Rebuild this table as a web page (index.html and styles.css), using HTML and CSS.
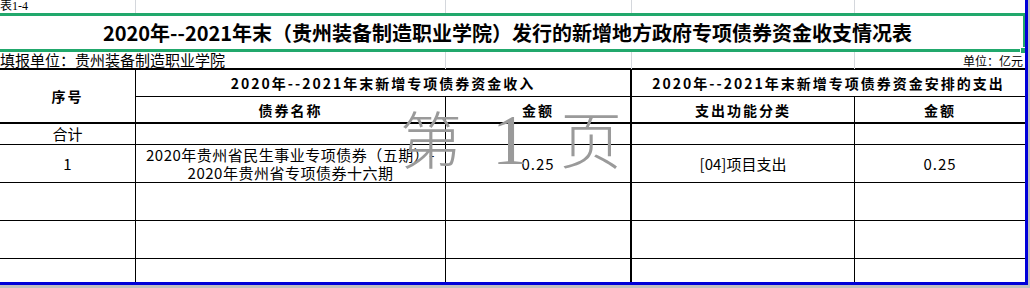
FILE: index.html
```html
<!DOCTYPE html>
<html lang="zh-CN">
<head>
<meta charset="utf-8">
<title>专项债券资金收支情况表</title>
<link rel="stylesheet" href="styles.css">
</head>
<body>
<div class="page">
  <div class="sheet">
    <div class="gridrow toprow">
      <div class="gc"><span class="tag">表1-4</span></div>
      <div class="gc"></div>
      <div class="gc"></div>
      <div class="gc"></div>
      <div class="gc last"></div>
    </div>
    <div class="title">
      <span>2020年--2021年末（贵州装备制造职业学院）发行的新增地方政府专项债券资金收支情况表</span>
      <span class="handle"></span>
    </div>
    <div class="gridrow unitrow">
      <div class="gc span2"><span class="unit-left">填报单位：贵州装备制造职业学院</span></div>
      <div class="gc"></div>
      <div class="gc"></div>
      <div class="gc last right"><span class="unit-right">单位：亿元</span></div>
    </div>
    <div class="table">
      <div class="cell hd seq">序号</div>
      <div class="cell hd grp">2020年--2021年末新增专项债券资金收入</div>
      <div class="cell hd grp last">2020年--2021年末新增专项债券资金安排的支出</div>

      <div class="cell hd sub">债券名称</div>
      <div class="cell hd sub sep">金额</div>
      <div class="cell hd sub">支出功能分类</div>
      <div class="cell hd sub last">金额</div>

      <div class="cell r-sum">合计</div>
      <div class="cell r-sum"></div>
      <div class="cell r-sum sep"></div>
      <div class="cell r-sum"></div>
      <div class="cell r-sum last"></div>

      <div class="cell r-tall">1</div>
      <div class="cell r-tall name">2020年贵州省民生事业专项债券（五期）-<br>2020年贵州省专项债券十六期</div>
      <div class="cell r-tall sep num">0.25</div>
      <div class="cell r-tall">[04]项目支出</div>
      <div class="cell r-tall last num">0.25</div>

      <div class="cell r-tall"></div>
      <div class="cell r-tall"></div>
      <div class="cell r-tall sep"></div>
      <div class="cell r-tall"></div>
      <div class="cell r-tall last"></div>

      <div class="cell r-tall"></div>
      <div class="cell r-tall"></div>
      <div class="cell r-tall sep"></div>
      <div class="cell r-tall"></div>
      <div class="cell r-tall last"></div>

      <div class="cell r-end"></div>
      <div class="cell r-end"></div>
      <div class="cell r-end sep"></div>
      <div class="cell r-end"></div>
      <div class="cell r-end last"></div>
    </div>
    <div class="watermark">
      <span class="wm-cjk">第</span>
      <span class="wm-num">1</span>
      <span class="wm-cjk">页</span>
    </div>
  </div>
</div>
</body>
</html>
```

FILE: styles.css
```css
* { box-sizing: border-box; }

html, body {
  margin: 0;
  padding: 0;
  background: #c0c0c0;
}

.page {
  width: 1030px;
  height: 288px;
  background: #c0c0c0;
  overflow: hidden;
}

.sheet {
  position: relative;
  width: 1028px;
  height: 285px;
  background: #ffffff;
  border-right: 3px solid #0000d8;
  border-bottom: 3px solid #0000d8;
  overflow: hidden;
  font-family: "Noto Sans CJK SC", "Liberation Sans", sans-serif;
  color: #000;
}

/* light spreadsheet gridline rows */
.gridrow {
  display: grid;
  grid-template-columns: 136px 310px 186px 223px 170px;
}

.gc {
  border-right: 1px solid #d4d7dc;
  white-space: nowrap;
  overflow: visible;
}

.gc.last { border-right: none; }
.gc.span2 { grid-column: span 2; }
.gc.right { text-align: right; padding-right: 2px; }

.toprow { height: 13px; }

.tag {
  display: block;
  font-family: "Liberation Serif", "Noto Sans CJK SC", serif;
  font-size: 12px;
  line-height: 12px;
}

.title {
  position: relative;
  height: 39px;
  border-top: 3px solid #21a86c;
  border-bottom: 3px solid #21a86c;
  border-right: 2px solid #21a86c;
  display: flex;
  align-items: center;
  justify-content: center;
  padding-right: 8px;
  font-size: 20px;
  font-weight: 700;
  line-height: 24px;
  white-space: nowrap;
}

.handle {
  position: absolute;
  right: -4px;
  bottom: -5px;
  width: 7px;
  height: 7px;
  background: #21a86c;
  border: 1px solid #ffffff;
}

.unitrow {
  height: 16px;
  font-size: 15px;
  line-height: 16px;
}

.unit-right {
  font-size: 12px;
  line-height: 16px;
}

/* main table */
.table {
  display: grid;
  grid-template-columns: 136px 310px 186px 223px 170px;
  grid-template-rows: 27px 27px 21px 38px 38px 38px 23px;
  border-top: 2px solid #000;
}

.cell {
  display: flex;
  align-items: center;
  justify-content: center;
  text-align: center;
  border-right: 1px solid #000;
  border-bottom: 1px solid #000;
  font-size: 15px;
  line-height: 18px;
  white-space: nowrap;
}

.cell.last { border-right: none; }
.cell.sep { border-right: 2px solid #000; }

.hd {
  font-size: 14px;
  font-weight: 700;
  letter-spacing: 2px;
}

.seq {
  grid-row: span 2;
  border-bottom: 2px solid #000;
}

.grp { grid-column: span 2; }
.grp:not(.last) { border-right: 2px solid #000; }

.sub { border-bottom: 2px solid #000; }

.r-end { border-bottom: none; }

.name { letter-spacing: 0.5px; }

.num { letter-spacing: 1px; }

/* page watermark overlay */
.watermark {
  position: absolute;
  left: 400px;
  top: 104px;
  display: flex;
  align-items: baseline;
  color: #9a9a9a;
  pointer-events: none;
  line-height: 1;
}

.wm-cjk {
  font-family: "Noto Sans CJK SC", sans-serif;
  font-weight: 300;
  font-size: 62px;
}

.wm-num {
  font-family: "Liberation Serif", serif;
  font-size: 72px;
  margin: 0 32px 0 30px;
}
```
